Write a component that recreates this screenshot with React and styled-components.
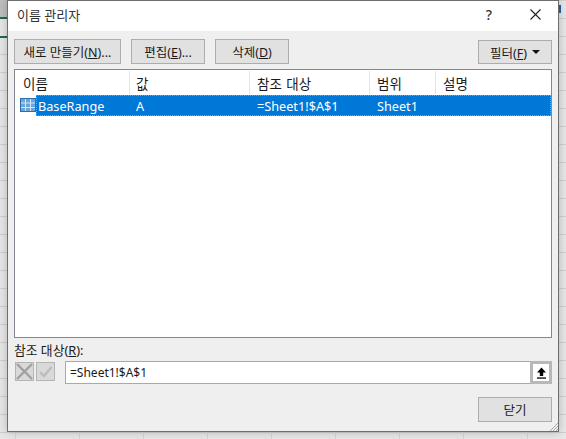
import React from 'react';
import styled, { createGlobalStyle } from 'styled-components';

const GlobalStyle = createGlobalStyle`
  html, body {
    margin: 0;
    padding: 0;
    overflow: hidden;
  }
  body {
    font-family: "Noto Sans", "Noto Sans CJK KR", sans-serif;
    font-size: 12px;
    color: #1a1a1a;
  }
`;

const Sheet = styled.div`
  position: relative;
  width: 566px;
  height: 439px;
  overflow: hidden;
  background-color: #e6e6e6;
  background-image:
    repeating-linear-gradient(to right, transparent 0, transparent 15px, #d4d4d4 15px, #d4d4d4 16px, transparent 16px, transparent 64px),
    repeating-linear-gradient(to bottom, #cfcfcf 0, #cfcfcf 1px, transparent 1px, transparent 18px);
`;

const SheetHeader = styled.div`
  height: 17px;
  width: 8px;
  background: #bdbdbd;
  border-bottom: 2px solid #1e6b41;
`;

const GreenLine = styled.div`
  width: 8px;
  height: 2px;
  margin-top: 17px;
  background: #1e6b41;
`;

const PeekGlyph = styled.div`
  position: absolute;
  left: 559px;
  top: 5px;
  width: 2px;
  height: 8px;
  background: #2a5f9e;
`;

const Dialog = styled.div`
  position: absolute;
  left: 7px;
  top: 0;
  width: 550px;
  height: 430px;
  display: flex;
  flex-direction: column;
  background: #efefef;
  border: 1px solid #6e6e6e;
  box-shadow: 0 0 8px rgba(0, 0, 0, 0.22);
`;

const TitleBar = styled.div`
  box-sizing: border-box;
  height: 30px;
  flex: none;
  display: flex;
  align-items: center;
  background: #fff;
  padding: 0 0 3px 9px;
  font-size: 13px;
  color: #333;
`;

const TitleText = styled.span`
  flex: 1;
`;

const TitleIcon = styled.div`
  width: 46px;
  height: 27px;
  display: flex;
  align-items: center;
  justify-content: center;
  font-size: 14px;
  font-weight: 500;
`;

const Body = styled.div`
  flex: 1;
  display: flex;
  flex-direction: column;
  padding: 8px 6px 0;
  position: relative;
`;

const Toolbar = styled.div`
  display: flex;
  gap: 10px;
`;

const Button = styled.div`
  box-sizing: border-box;
  width: ${(p) => p.$w}px;
  height: ${(p) => (p.$push ? 24 : 25)}px;
  margin-left: ${(p) => (p.$push ? 'auto' : '0')};
  margin-top: ${(p) => (p.$push ? 1 : 0)}px;
  display: flex;
  align-items: center;
  justify-content: center;
  gap: 5px;
  background: #e1e1e1;
  border: 1px solid #adadad;
  font-size: 12.5px;
`;

const Key = styled.span`
  text-decoration: underline;
`;

const Caret = styled.span`
  width: 0;
  height: 0;
  border-left: 4px solid transparent;
  border-right: 4px solid transparent;
  border-top: 4px solid #111;
`;

const List = styled.div`
  box-sizing: border-box;
  height: 269px;
  margin-top: 5px;
  background: #fff;
  border: 1px solid #828790;
  padding-top: 1px;
`;

const Row = styled.div`
  display: grid;
  grid-template-columns: 115px 120px 120px 66px 1fr;
`;

const HeaderCell = styled.div`
  box-sizing: border-box;
  height: 23px;
  padding-left: ${(p) => p.$pad}px;
  border-right: ${(p) => (p.$last ? 'none' : '1px solid #e5e5e5')};
  display: flex;
  align-items: center;
  font-size: 13.5px;
  word-spacing: 1px;
`;

const DataRow = styled(Row)`
  position: relative;
  height: 21px;
  margin-top: 1px;
`;

const Cell = styled.div`
  box-sizing: border-box;
  height: 21px;
  padding-left: ${(p) => p.$pad}px;
  display: flex;
  align-items: center;
  font-size: 12.7px;
  color: #fff;
  background: transparent;
  position: relative;
  z-index: 1;
`;

const NameCell = styled(Cell)`
  margin-left: 21px;
  padding-left: 2px;
`;

const Selection = styled.div`
  position: absolute;
  left: 21px;
  right: 0;
  top: 0;
  bottom: 0;
  background: #0078d7;
  outline: 1px dotted #f08a24;
  outline-offset: -1px;
`;

const RowIcon = styled.svg`
  position: absolute;
  left: 5px;
  top: 3px;
`;

const RefLabel = styled.div`
  margin-top: 3px;
  font-size: 12.8px;
  height: 18px;
  line-height: 18px;
`;

const RefRow = styled.div`
  display: flex;
  align-items: center;
  margin-top: 2px;
  padding-left: 1px;
`;

const MarkButton = styled.div`
  box-sizing: border-box;
  width: 19px;
  height: 19px;
  margin: 0 2px 2px 0;
  background: #d9d9d9;
  border: 1px solid #b4b4b4;
  display: flex;
  align-items: center;
  justify-content: center;
`;

const RefBox = styled.div`
  box-sizing: border-box;
  flex: 1;
  height: 23px;
  margin-left: 8px;
  display: flex;
  align-items: center;
  background: #fff;
  border: 1px solid #a9a9a9;
  padding-left: 4px;
  font-size: 12px;
`;

const RefText = styled.span`
  flex: 1;
`;

const Collapse = styled.div`
  box-sizing: border-box;
  width: 22px;
  align-self: stretch;
  margin: -1px -1px -1px 0;
  display: flex;
  align-items: center;
  justify-content: center;
  background: #fff;
  border: 3px solid #b8b8b8;
`;

const Footer = styled.div`
  display: flex;
  justify-content: flex-end;
  margin-top: 13px;
`;

const Grip = styled.svg`
  position: absolute;
  right: 0;
  bottom: 0;
`;

const columns = [
  { label: '이름', pad: 8 },
  { label: '값', pad: 6 },
  { label: '참조 대상', pad: 7 },
  { label: '범위', pad: 7 },
  { label: '설명', pad: 7, last: true },
];

export default function App() {
  return (
    <Sheet>
      <GlobalStyle />
      <SheetHeader />
      <GreenLine />
      <PeekGlyph />
      <Dialog>
        <TitleBar>
          <TitleText>이름 관리자</TitleText>
          <TitleIcon>?</TitleIcon>
          <TitleIcon>
            <svg width="11" height="11" viewBox="0 0 11 11">
              <path d="M0.5 0.5 L10.5 10.5 M10.5 0.5 L0.5 10.5" stroke="#222" strokeWidth="1.1" fill="none" />
            </svg>
          </TitleIcon>
        </TitleBar>
        <Body>
          <Toolbar>
            <Button $w={107}>
              <span>새로 만들기(<Key>N</Key>)...</span>
            </Button>
            <Button $w={74}>
              <span>편집(<Key>E</Key>)...</span>
            </Button>
            <Button $w={74}>
              <span>삭제(<Key>D</Key>)</span>
            </Button>
            <Button $w={74} $push>
              <span>필터(<Key>F</Key>)</span>
              <Caret />
            </Button>
          </Toolbar>
          <List>
            <Row>
              {columns.map((c) => (
                <HeaderCell key={c.label} $pad={c.pad} $last={c.last}>{c.label}</HeaderCell>
              ))}
            </Row>
            <DataRow>
              <Selection />
              <RowIcon width="16" height="14" viewBox="0 0 16 14">
                <rect x="0.5" y="0.5" width="15" height="13" fill="#6aa5dc" stroke="#2f6da8" />
                <path d="M5.5 1 V13 M10.5 1 V13 M1 5 H15 M1 9.5 H15" stroke="#d4e6f6" strokeWidth="1" />
              </RowIcon>
              <NameCell $pad={2}>BaseRange</NameCell>
              <Cell $pad={6}>A</Cell>
              <Cell $pad={7}>=Sheet1!$A$1</Cell>
              <Cell $pad={7}>Sheet1</Cell>
              <Cell $pad={7} />
            </DataRow>
          </List>
          <RefLabel>참조 대상(<Key>R</Key>):</RefLabel>
          <RefRow>
            <MarkButton>
              <svg width="17" height="17" viewBox="0 0 17 17">
                <path d="M1 1 L16 16 M16 1 L1 16" stroke="#a0a0a0" strokeWidth="2.4" fill="none" />
              </svg>
            </MarkButton>
            <MarkButton>
              <svg width="15" height="15" viewBox="0 0 15 15">
                <path d="M2 8 L6 12 L13.5 3" stroke="#bcbcbc" strokeWidth="2.4" fill="none" />
              </svg>
            </MarkButton>
            <RefBox>
              <RefText>=Sheet1!$A$1</RefText>
              <Collapse>
                <svg width="11" height="12" viewBox="0 0 11 12">
                  <path d="M5.5 0.5 L10 5.5 H7.2 V9 H3.8 V5.5 H1 Z" fill="#000" />
                  <rect x="1" y="10.4" width="9" height="1.3" fill="#000" />
                </svg>
              </Collapse>
            </RefBox>
          </RefRow>
          <Footer>
            <Button $w={74}>닫기</Button>
          </Footer>
          <Grip width="9" height="9" viewBox="0 0 9 9">
            <path d="M9 1 L1 9 M9 4 L4 9 M9 7 L7 9" stroke="#a8a8a8" strokeWidth="1" fill="none" />
          </Grip>
        </Body>
      </Dialog>
    </Sheet>
  );
}
